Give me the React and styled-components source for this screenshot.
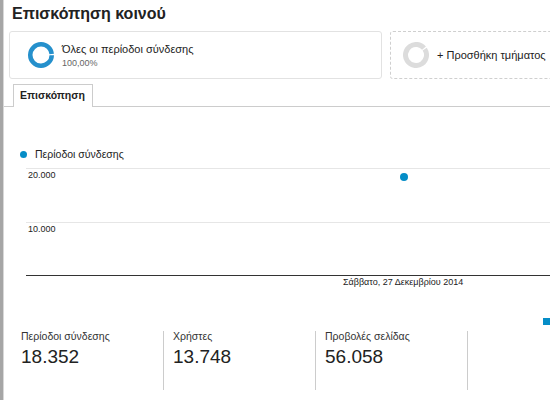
import React from "react";
import styled, { createGlobalStyle } from "styled-components";

const Global = createGlobalStyle`
  html, body { margin: 0; padding: 0; background: #fff; }
  body { width: 550px; height: 400px; overflow: hidden; font-family: "Liberation Sans", Arial, sans-serif; color: #222; }
  #root { width: 550px; height: 400px; }
`;

const BLUE = "#058dc7";

const Page = styled.div`
  display: flex;
  width: 550px;
  height: 400px;
  overflow: hidden;
`;

const SideBar = styled.div`
  flex: 0 0 3px;
  background: #a6a6a6;
  border-right: 1px solid #d8d8d8;
`;

const Main = styled.div`
  flex: 1;
  min-width: 0;
  overflow: hidden;
`;

const Title = styled.h1`
  margin: 0;
  padding: 4px 0 0 8px;
  font-size: 16px;
  line-height: 20px;
  font-weight: bold;
  color: #222;
  white-space: nowrap;
`;

const Segments = styled.div`
  display: flex;
  gap: 8px;
  margin-top: 7px;
  padding-left: 5px;
`;

const SegmentCard = styled.div`
  flex: 0 0 373px;
  box-sizing: border-box;
  height: 48px;
  display: flex;
  align-items: center;
  gap: 8px;
  padding-left: ${(p) => (p.$dashed ? "12px" : "18px")};
  border: 1px ${(p) => (p.$dashed ? "dashed #cfcfcf" : "solid #e2e2e2")};
  border-radius: 3px;
`;

const SegmentText = styled.div`
  display: flex;
  flex-direction: column;
`;

const SegmentName = styled.span`
  font-size: 11px;
  line-height: 14px;
  color: #222;
  white-space: nowrap;
`;

const SegmentPct = styled.span`
  font-size: 9px;
  line-height: 11px;
  color: #666;
  margin-top: 2px;
`;

const Ring = ({ color, width = 4.5, gapAngle = 0 }) => {
  const r = 13 - width / 2;
  const c = 2 * Math.PI * r;
  return (
    <svg width="26" height="26" viewBox="0 0 26 26" style={{ flexShrink: 0 }}>
      <circle
        cx="13"
        cy="13"
        r={r}
        fill="none"
        stroke={color}
        strokeWidth={width}
        strokeDasharray={`${c - 1.6} 1.6`}
        transform={`rotate(${gapAngle + 1} 13 13)`}
      />
    </svg>
  );
};

const TabBar = styled.div`
  display: flex;
  margin-top: 5px;
  padding-left: 9px;
  border-bottom: 1px solid #cccccc;
`;

const Tab = styled.div`
  box-sizing: border-box;
  height: 23px;
  margin-bottom: -1px;
  padding: 4px 7px 0 6px;
  background: #fff;
  border: 1px solid #cccccc;
  border-bottom: none;
  font-size: 10.5px;
  line-height: 13px;
  font-weight: bold;
  color: #222;
`;

const ChartSection = styled.div`
  padding-top: 40px;
`;

const Legend = styled.div`
  display: flex;
  align-items: center;
  gap: 8px;
  padding-left: 16px;
  font-size: 10.5px;
  line-height: 14px;
  color: #222;
`;

const LegendDot = styled.span`
  width: 7px;
  height: 7px;
  border-radius: 50%;
  background: ${BLUE};
`;

const Plot = styled.div`
  position: relative;
  margin: 7px 0 0 22px;
`;

const GridRow = styled.div`
  box-sizing: border-box;
  height: ${(p) => p.$h}px;
  border-top: 1px solid #e6e6e6;
  padding: 1px 0 0 2px;
  font-size: 9px;
  line-height: 11px;
  color: #222;
`;

const Axis = styled.div`
  border-top: 1px solid #333;
  padding: 1px 0 0 ${(p) => p.$offset}px;
  font-size: 9px;
  line-height: 11px;
  color: #222;
  white-space: nowrap;
`;

const Point = styled.span`
  position: absolute;
  width: 8px;
  height: 8px;
  border-radius: 50%;
  background: ${BLUE};
`;

const PieLegendRow = styled.div`
  display: flex;
  justify-content: flex-end;
  margin-top: 30px;
`;

const PieSwatch = styled.span`
  width: 7px;
  height: 7px;
  background: ${BLUE};
`;

const Metrics = styled.div`
  display: flex;
  margin-top: 6px;
  padding-left: 7px;
`;

const Metric = styled.div`
  flex: 0 0 152px;
  box-sizing: border-box;
  height: 59px;
  padding-left: ${(p) => (p.$first ? "10px" : "9px")};
  border-left: ${(p) => (p.$first ? "none" : "1px solid #cccccc")};
`;

const MetricLabel = styled.div`
  font-size: 10.5px;
  line-height: 11px;
  color: #333;
  white-space: nowrap;
`;

const MetricValue = styled.div`
  margin-top: 4px;
  font-size: 19px;
  line-height: 22px;
  color: #222;
`;

const metrics = [
  { label: "Περίοδοι σύνδεσης", value: "18.352" },
  { label: "Χρήστες", value: "13.748" },
  { label: "Προβολές σελίδας", value: "56.058" },
  { label: "", value: "" },
];

export default function App() {
  const pointValue = 18352;
  const pxPer10k = 54;
  const pointTop = 108 - (pointValue / 10000) * pxPer10k - 4;
  return (
    <>
      <Global />
      <Page>
        <SideBar />
        <Main>
          <Title>Επισκόπηση κοινού</Title>
          <Segments>
            <SegmentCard>
              <Ring color="#2590cc" width={4.5} gapAngle={0} />
              <SegmentText>
                <SegmentName>Όλες οι περίοδοι σύνδεσης</SegmentName>
                <SegmentPct>100,00%</SegmentPct>
              </SegmentText>
            </SegmentCard>
            <SegmentCard $dashed>
              <Ring color="#dcdcdc" width={5} gapAngle={-35} />
              <SegmentName>+ Προσθήκη τμήματος</SegmentName>
            </SegmentCard>
          </Segments>
          <TabBar>
            <Tab>Επισκόπηση</Tab>
          </TabBar>
          <ChartSection>
            <Legend>
              <LegendDot />
              <span>Περίοδοι σύνδεσης</span>
            </Legend>
            <Plot>
              <GridRow $h={54}>20.000</GridRow>
              <GridRow $h={53}>10.000</GridRow>
              <Axis $offset={317}>Σάββατο, 27 Δεκεμβρίου 2014</Axis>
              <Point style={{ left: 374, top: pointTop }} />
            </Plot>
          </ChartSection>
          <PieLegendRow>
            <PieSwatch />
          </PieLegendRow>
          <Metrics>
            {metrics.map((m, i) => (
              <Metric key={i} $first={i === 0}>
                <MetricLabel>{m.label}</MetricLabel>
                <MetricValue>{m.value}</MetricValue>
              </Metric>
            ))}
          </Metrics>
        </Main>
      </Page>
    </>
  );
}
